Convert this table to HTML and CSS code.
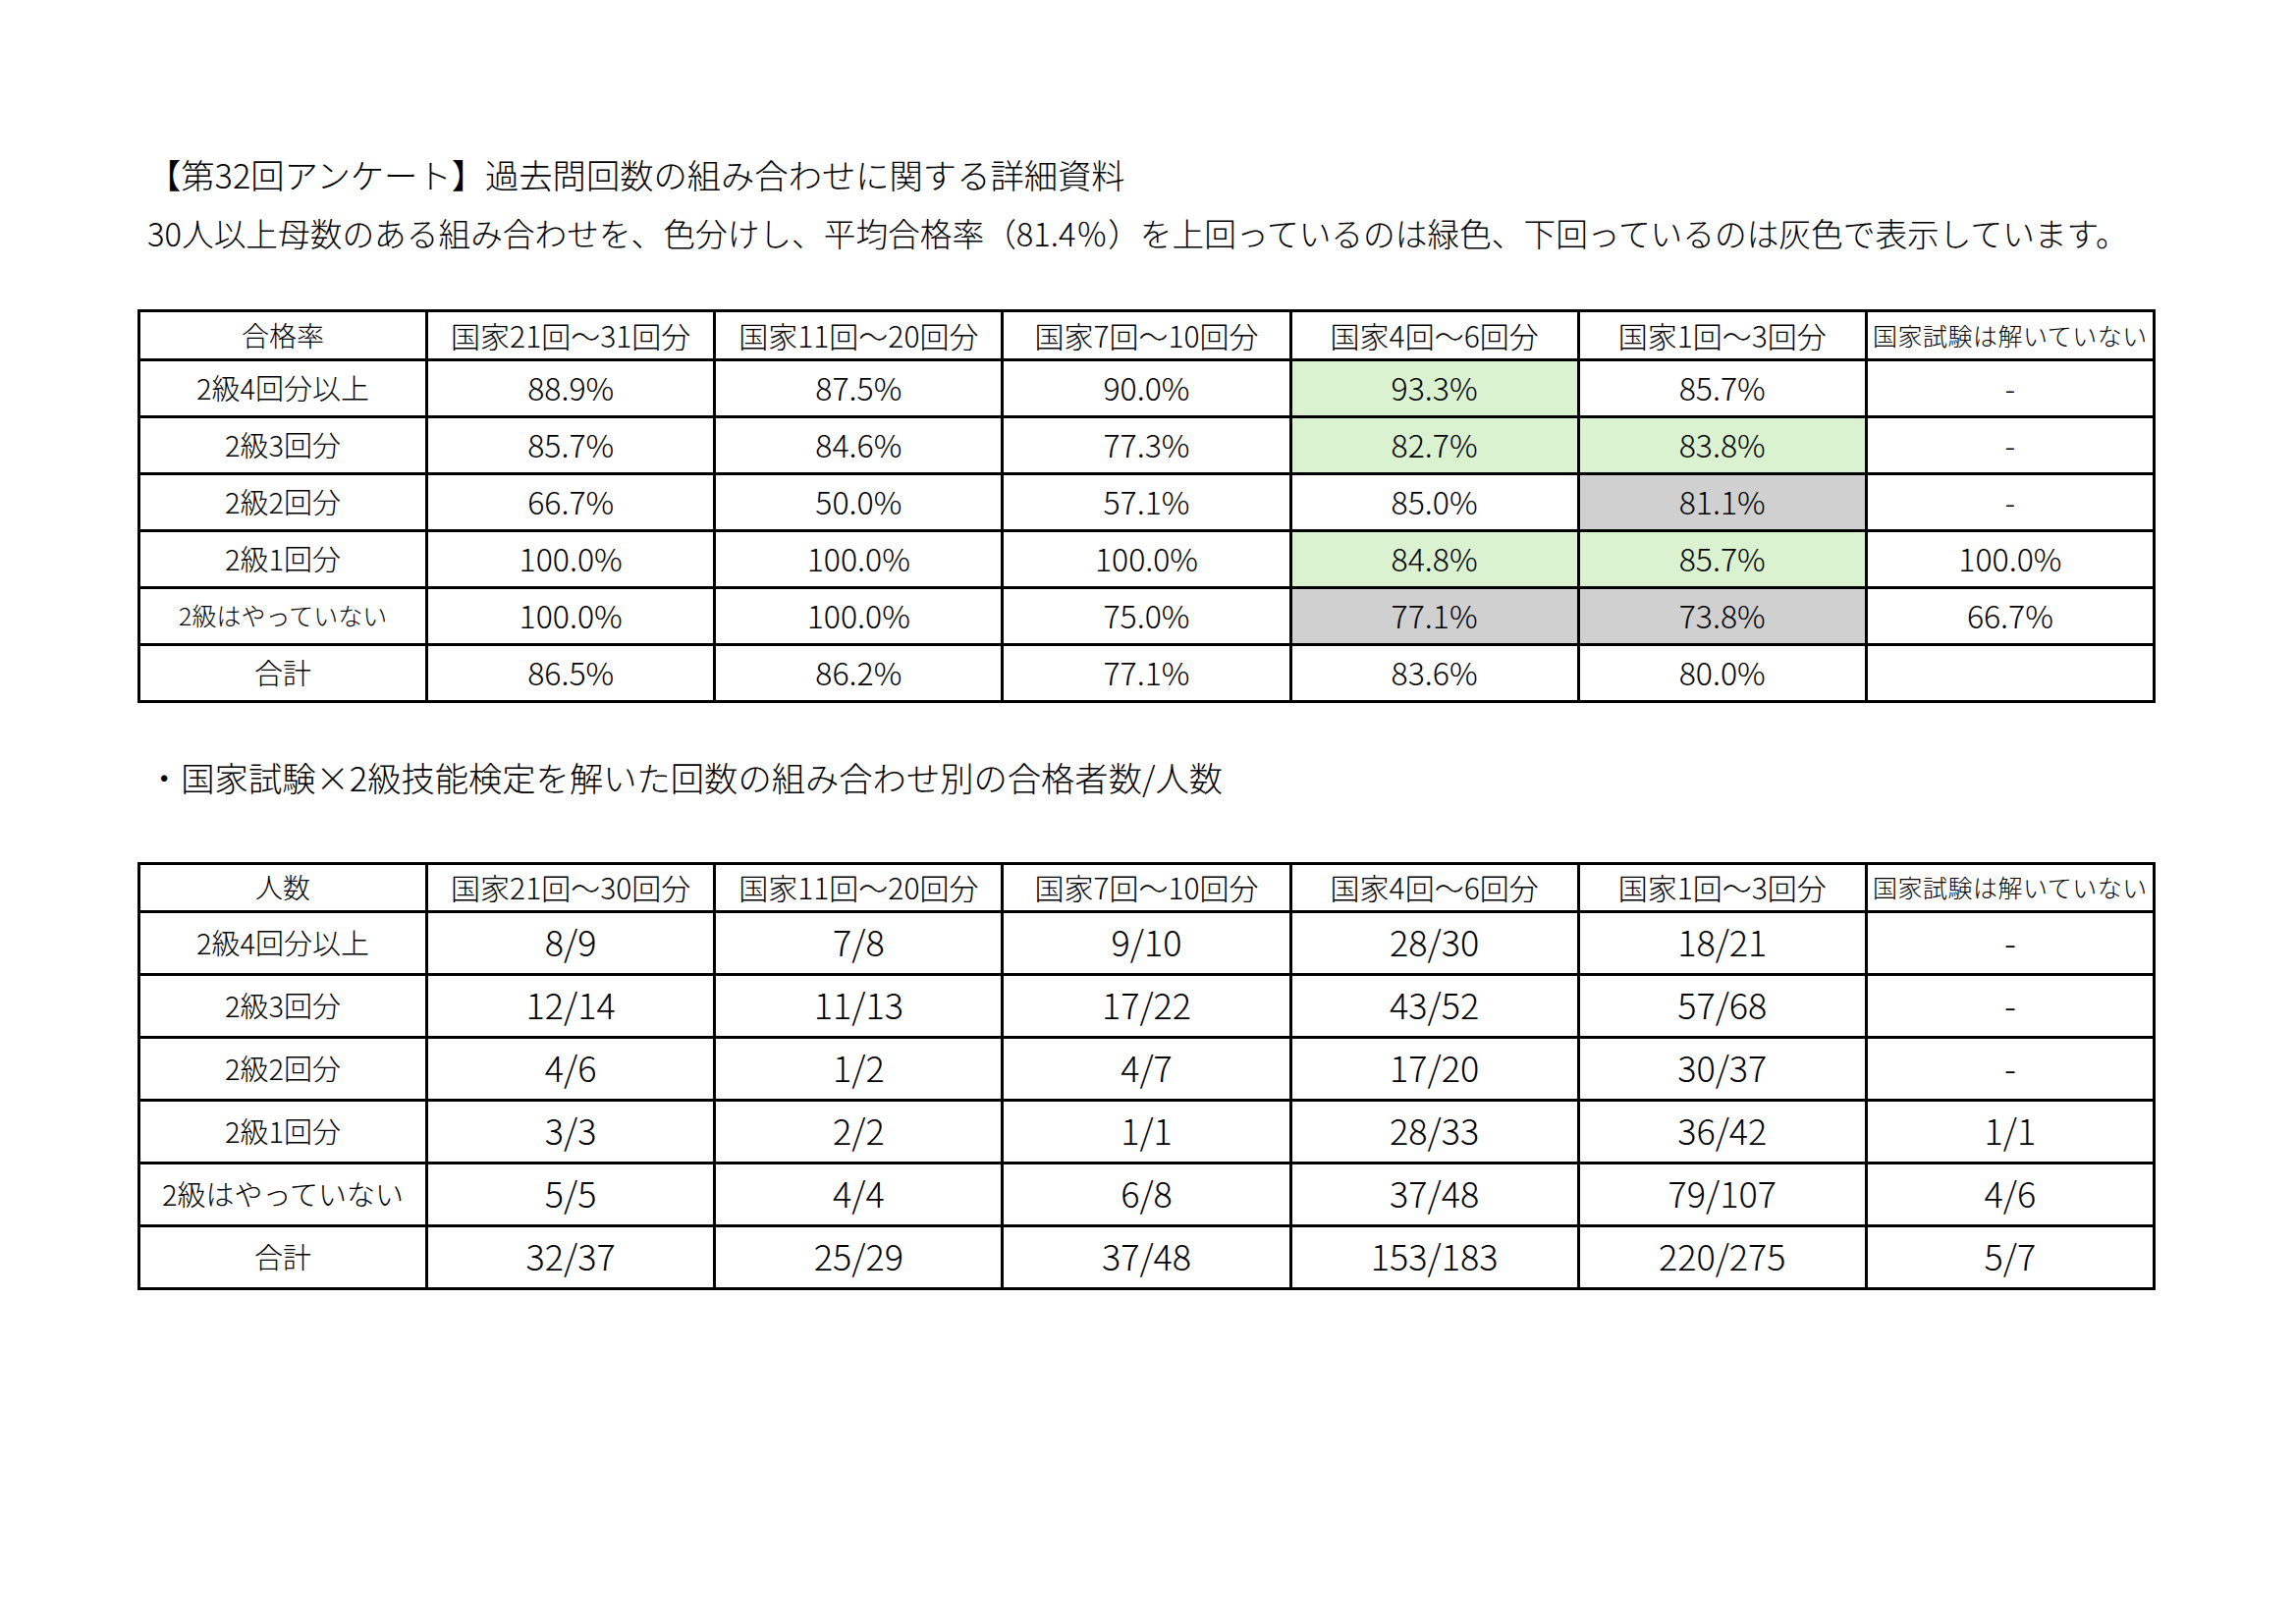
FILE: index.html
```html
<!DOCTYPE html>
<html lang="ja">
<head>
<meta charset="utf-8">
<title>【第32回アンケート】過去問回数の組み合わせに関する詳細資料</title>
<link rel="stylesheet" href="styles.css">
</head>
<body>
<main class="sheet">
  <header class="intro">
    <h1 class="title">【第32回アンケート】過去問回数の組み合わせに関する詳細資料</h1>
    <p class="note">30人以上母数のある組み合わせを、色分けし、平均合格率（81.4％）を上回っているのは緑色、下回っているのは灰色で表示しています。</p>
  </header>

  <table class="grid rate-table">
    <thead>
      <tr class="head-row">
        <th class="corner">合格率</th>
        <th>国家21回～31回分</th>
        <th>国家11回～20回分</th>
        <th>国家7回～10回分</th>
        <th>国家4回～6回分</th>
        <th>国家1回～3回分</th>
        <th class="small-head">国家試験は解いていない</th>
      </tr>
    </thead>
    <tbody>
      <tr>
        <th class="row-head">2級4回分以上</th>
        <td>88.9%</td><td>87.5%</td><td>90.0%</td><td class="up">93.3%</td><td>85.7%</td><td>-</td>
      </tr>
      <tr>
        <th class="row-head">2級3回分</th>
        <td>85.7%</td><td>84.6%</td><td>77.3%</td><td class="up">82.7%</td><td class="up">83.8%</td><td>-</td>
      </tr>
      <tr>
        <th class="row-head">2級2回分</th>
        <td>66.7%</td><td>50.0%</td><td>57.1%</td><td>85.0%</td><td class="down">81.1%</td><td>-</td>
      </tr>
      <tr>
        <th class="row-head">2級1回分</th>
        <td>100.0%</td><td>100.0%</td><td>100.0%</td><td class="up">84.8%</td><td class="up">85.7%</td><td>100.0%</td>
      </tr>
      <tr>
        <th class="row-head row-head-sm">2級はやっていない</th>
        <td>100.0%</td><td>100.0%</td><td>75.0%</td><td class="down">77.1%</td><td class="down">73.8%</td><td>66.7%</td>
      </tr>
      <tr>
        <th class="row-head">合計</th>
        <td>86.5%</td><td>86.2%</td><td>77.1%</td><td>83.6%</td><td>80.0%</td><td></td>
      </tr>
    </tbody>
  </table>

  <p class="bullet">・国家試験×2級技能検定を解いた回数の組み合わせ別の合格者数/人数</p>

  <table class="grid count-table">
    <thead>
      <tr class="head-row">
        <th class="corner">人数</th>
        <th>国家21回～30回分</th>
        <th>国家11回～20回分</th>
        <th>国家7回～10回分</th>
        <th>国家4回～6回分</th>
        <th>国家1回～3回分</th>
        <th class="small-head">国家試験は解いていない</th>
      </tr>
    </thead>
    <tbody>
      <tr>
        <th class="row-head">2級4回分以上</th>
        <td>8/9</td><td>7/8</td><td>9/10</td><td>28/30</td><td>18/21</td><td>-</td>
      </tr>
      <tr>
        <th class="row-head">2級3回分</th>
        <td>12/14</td><td>11/13</td><td>17/22</td><td>43/52</td><td>57/68</td><td>-</td>
      </tr>
      <tr>
        <th class="row-head">2級2回分</th>
        <td>4/6</td><td>1/2</td><td>4/7</td><td>17/20</td><td>30/37</td><td>-</td>
      </tr>
      <tr>
        <th class="row-head">2級1回分</th>
        <td>3/3</td><td>2/2</td><td>1/1</td><td>28/33</td><td>36/42</td><td>1/1</td>
      </tr>
      <tr>
        <th class="row-head">2級はやっていない</th>
        <td>5/5</td><td>4/4</td><td>6/8</td><td>37/48</td><td>79/107</td><td>4/6</td>
      </tr>
      <tr>
        <th class="row-head">合計</th>
        <td>32/37</td><td>25/29</td><td>37/48</td><td>153/183</td><td>220/275</td><td>5/7</td>
      </tr>
    </tbody>
  </table>
</main>
</body>
</html>
```

FILE: styles.css
```css
html, body {
  margin: 0;
  padding: 0;
  background: #ffffff;
}

body {
  font-family: "Noto Sans CJK JP", "Noto Sans", sans-serif;
  font-weight: 300;
  color: #000000;
}

.sheet {
  width: 2338px;
  height: 1654px;
  box-sizing: border-box;
  padding: 147px 0 0 140px;
}

.intro {
  padding-left: 10px;
}

.title,
.note,
.bullet {
  margin: 0;
  font-size: 34.3px;
  font-weight: 300;
  line-height: 60px;
  white-space: nowrap;
}

.note {
  font-size: 32.7px;
}

.bullet {
  padding-left: 10px;
  margin-top: 45px;
  margin-bottom: 57px;
  font-size: 34.3px;
}

.grid {
  border-collapse: collapse;
  table-layout: fixed;
  width: 2055px;
}

.rate-table {
  margin-top: 48px;
}

.grid th,
.grid td {
  border: 3px solid #000000;
  padding: 0;
  text-align: center;
  vertical-align: middle;
  font-weight: 300;
  white-space: nowrap;
  overflow: hidden;
}

.head-row th {
  font-size: 30px;
  height: 45px;
  padding-bottom: 2px;
}

.count-table .head-row th {
  height: 43px;
}

.head-row .corner {
  font-size: 28px;
}

.head-row .small-head {
  font-size: 25px;
  letter-spacing: 0.5px;
}

.row-head {
  font-size: 29px;
}

.row-head-sm {
  font-size: 25px;
}

.rate-table tbody th {
  height: 52px;
  padding-bottom: 3px;
}

.rate-table tbody td {
  height: 51px;
  font-size: 32px;
  padding-bottom: 4px;
}

.count-table tbody th {
  height: 58px;
  padding-bottom: 3px;
}

.count-table tbody td {
  height: 56px;
  font-size: 36px;
  padding-bottom: 5px;
}

.up {
  background: #daf2d0;
}

.down {
  background: #d0d0d0;
}
```
